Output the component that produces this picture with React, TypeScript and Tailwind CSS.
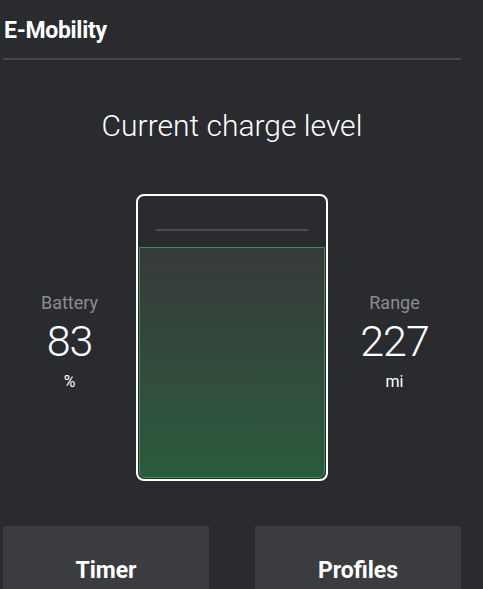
import React from "react";

const Stat = ({ label, value, unit }: { label: string; value: string; unit: string }) => (
  <div className="flex flex-1 flex-col items-center pt-[8px]">
    <span className="text-[18px] leading-[22px] text-[#8b8c90]">{label}</span>
    <span className="mt-[4px] text-[43px] leading-[46px] font-light tracking-[-1px] text-white">{value}</span>
    <span className="mt-[8px] text-[16px] leading-[20px] text-white">{unit}</span>
  </div>
);

export default function App() {
  const charge = 83;

  return (
    <div className="h-[589px] w-[483px] overflow-hidden bg-[#2a2b2f] font-['Roboto',sans-serif]">
      <div className="flex w-[461px] flex-col pl-[3px]">
        <h1 className="pl-[1px] pt-[16px] text-[23px] leading-[30px] font-bold tracking-[-0.3px] text-white">
          E-Mobility
        </h1>
        <div className="mt-[12px] h-[2px] bg-[#48494e]" />

        <h2 className="mt-[48px] text-center text-[30px] leading-[36px] font-light text-white">
          Current charge level
        </h2>

        <div className="mt-[50px] flex items-center">
          <Stat label="Battery" value={String(charge)} unit="%" />

          <div className="flex h-[287px] w-[192px] flex-col rounded-[8px] border-2 border-white p-px">
            <div className="flex h-[50px] items-start px-[17px] pt-[32px]">
              <div className="h-[2px] w-full bg-[#4a4b50]" />
            </div>
            <div className="flex-1 rounded-b-[6px] border border-[#3f8d55] bg-gradient-to-b from-[#363a3b] to-[#2a5b3b]" />
          </div>

          <Stat label="Range" value="227" unit="mi" />
        </div>

        <div className="mt-[45px] flex justify-between">
          <button className="flex h-[80px] w-[206px] items-start justify-center bg-[#3b3c40] pt-[28px] text-[23px] font-bold text-white">
            Timer
          </button>
          <button className="flex h-[80px] w-[206px] items-start justify-center bg-[#3b3c40] pt-[28px] text-[23px] font-bold text-white">
            Profiles
          </button>
        </div>
      </div>
    </div>
  );
}
